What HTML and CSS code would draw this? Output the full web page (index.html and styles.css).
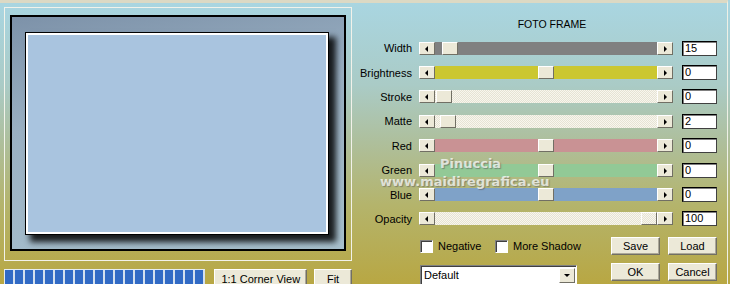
FILE: index.html
```html
<!DOCTYPE html>
<html lang="en">
<head>
  <meta charset="UTF-8" />
  <title>Foto Frame</title>
  <link rel="stylesheet" href="styles.css">
</head>
<body>

<div class="dialog">
  <div class="left">
    <div class="preview">
      <div class="frame">
        <div class="photo"></div>
      </div>
    </div>
    <div class="preview-bar">
      <div class="progress"></div>
      <button class="btn corner">1:1 Corner View</button>
      <button class="btn fit">Fit</button>
    </div>
  </div>

  <div class="panel">
    <div class="title">FOTO FRAME</div>

    <div class="rows">
      <label>Width</label>
      <div class="slider"><span class="arrow left"></span><div class="track gray"><span class="thumb" style="margin-left:7px"></span></div><span class="arrow right"></span></div>
      <div class="value">15</div>

      <label>Brightness</label>
      <div class="slider"><span class="arrow left"></span><div class="track yellow"><span class="thumb" style="margin-left:103px"></span></div><span class="arrow right"></span></div>
      <div class="value">0</div>

      <label>Stroke</label>
      <div class="slider"><span class="arrow left"></span><div class="track dots"><span class="thumb" style="margin-left:1px"></span></div><span class="arrow right"></span></div>
      <div class="value">0</div>

      <label>Matte</label>
      <div class="slider"><span class="arrow left"></span><div class="track dots"><span class="thumb" style="margin-left:5px"></span></div><span class="arrow right"></span></div>
      <div class="value">2</div>

      <label>Red</label>
      <div class="slider"><span class="arrow left"></span><div class="track red"><span class="thumb" style="margin-left:103px"></span></div><span class="arrow right"></span></div>
      <div class="value">0</div>

      <label>Green</label>
      <div class="slider"><span class="arrow left"></span><div class="track green"><span class="thumb" style="margin-left:103px"></span></div><span class="arrow right"></span></div>
      <div class="value">0</div>

      <label>Blue</label>
      <div class="slider"><span class="arrow left"></span><div class="track blue"><span class="thumb" style="margin-left:103px"></span></div><span class="arrow right"></span></div>
      <div class="value">0</div>

      <label>Opacity</label>
      <div class="slider"><span class="arrow left"></span><div class="track dots"><span class="thumb dots" style="margin-left:206px"></span></div><span class="arrow right"></span></div>
      <div class="value">100</div>
    </div>

    <div class="options">
      <div class="check first"><span class="box"></span>Negative</div>
      <div class="check second"><span class="box"></span>More Shadow</div>
      <button class="btn small">Save</button>
      <button class="btn small">Load</button>
    </div>

    <div class="actions">
      <div class="select">Default<span class="drop"></span></div>
      <button class="btn small ok">OK</button>
      <button class="btn small">Cancel</button>
    </div>
  </div>

  <div class="watermark">
    <div class="wm-name">Pinuccia</div>
    <div class="wm-site">www.maidiregrafica.eu</div>
  </div>
</div>

</body>
</html>
```

FILE: styles.css
```css
body {
  margin: 0;
  width: 730px;
  height: 284px;
  overflow: hidden;
  font-family: 'Liberation Sans', Arial, sans-serif;
  font-size: 11px;
  color: #000;
  background: linear-gradient(to bottom, #a9d6e2 0%, #aacbc6 30%, #aebf9c 50%, #b4b46c 72%, #b8a743 100%);
}

.dialog {
  position: relative;
  display: flex;
  width: 727px;
  height: 281px;
  border-top: 3px solid #dcd9c4;
  border-right: 1px solid #eef0e6;
}

.left {
  padding: 4px 0 0 4px;
  width: 348px;
}

.preview {
  width: 348px;
  height: 254px;
  box-sizing: border-box;
  border: 1px solid #f2f2ea;
  padding: 7px 5px 0;
}

.frame {
  width: 336px;
  height: 236px;
  box-sizing: border-box;
  border: 2px solid #000;
  padding: 16px 0 0 14px;
  background: linear-gradient(170deg, #7d92a9 0%, #9ab0c3 40%, #a8c0cd 100%);
}

.photo {
  width: 302px;
  height: 201px;
  box-sizing: border-box;
  border: 2px solid #fff;
  background-color: #a9c4df;
  box-shadow: 0 0 0 1px #000, 6px 6px 6px 2px rgba(0,0,0,0.85);
}

.preview-bar {
  display: flex;
  align-items: flex-start;
  margin-top: 8px;
}

.progress {
  width: 202px;
  height: 16px;
  box-sizing: border-box;
  border-top: 1px solid #e4ecf2;
  border-left: 1px solid #e4ecf2;
  background: repeating-linear-gradient(90deg, #316ac5 0 8px, #d4e0ee 8px 10px);
}

.btn {
  font-family: 'Liberation Sans', Arial, sans-serif;
  font-size: 11px;
  color: #000;
  background-color: #ece9d8;
  border: 1px solid;
  border-color: #fff #716f64 #716f64 #fff;
  box-shadow: inset -1px -1px #aca899;
  padding: 0;
  height: 18px;
}

.corner {
  margin-left: 9px;
  width: 93px;
  height: 19px;
}

.fit {
  margin-left: 7px;
  width: 38px;
  height: 19px;
}

.panel {
  flex: 1;
  padding-top: 11px;
}

.title {
  margin-left: 67px;
  width: 266px;
  line-height: 20px;
  text-align: center;
  font-size: 10.5px;
}

.rows {
  display: grid;
  grid-template-columns: 67px 254px 44px;
  grid-auto-rows: 24.4px;
  align-items: center;
  margin-top: 2px;
}

.rows label {
  text-align: right;
  padding-right: 7px;
  white-space: nowrap;
}

.slider {
  display: flex;
  height: 13px;
}

.arrow {
  position: relative;
  width: 16px;
  height: 13px;
  box-sizing: border-box;
  background-color: #ece9d8;
  border: 1px solid;
  border-color: #fff #716f64 #716f64 #fff;
}

.arrow::before {
  content: "";
  position: absolute;
  top: 3px;
  left: 5px;
  border-top: 3px solid transparent;
  border-bottom: 3px solid transparent;
}

.arrow.left::before {
  border-right: 3px solid #000;
}

.arrow.right::before {
  left: 6px;
  border-left: 3px solid #000;
}

.track {
  flex: 1;
  display: flex;
}

.gray { background-color: #808080; }
.yellow { background-color: #cbc730; }
.red { background-color: #c99294; }
.green { background-color: #92c996; }
.blue { background-color: #7fa2c8; }

.dots {
  background: repeating-conic-gradient(#f8f6ee 0 25%, #e6e3d4 0 50%) 0 0 / 2px 2px;
}

.thumb {
  width: 16px;
  height: 13px;
  box-sizing: border-box;
  background-color: #ece9d8;
  border: 1px solid;
  border-color: #fff #716f64 #716f64 #fff;
}

.value {
  margin-left: 9px;
  width: 35px;
  height: 15px;
  box-sizing: border-box;
  background: #fff;
  border: 1px solid;
  border-color: #000 #404040 #404040 #000;
  box-shadow: inset 1px 1px #808080;
  padding-left: 2px;
  line-height: 13px;
}

.options {
  display: flex;
  align-items: center;
  height: 18px;
  margin-top: 6px;
  padding-left: 68px;
}

.check {
  display: flex;
  align-items: center;
}

.check.first { width: 75px; }
.check.second { width: 116px; }

.box {
  width: 13px;
  height: 13px;
  box-sizing: border-box;
  background: #fff;
  border: 1px solid;
  border-color: #808080 #fff #fff #808080;
  box-shadow: inset 1px 1px #404040;
  margin-right: 5px;
}

.small {
  width: 49px;
  height: 18px;
  margin-right: 8px;
}

.actions {
  display: flex;
  align-items: flex-start;
  margin-top: 8px;
  padding-left: 68px;
}

.select {
  position: relative;
  width: 157px;
  height: 20px;
  margin-top: 2px;
  box-sizing: border-box;
  background: #fff;
  border: 1px solid;
  border-color: #808080 #fff #fff #808080;
  box-shadow: inset 1px 1px #404040;
  padding: 3px 0 0 3px;
}

.drop {
  position: absolute;
  top: 2px;
  right: 1px;
  width: 16px;
  height: 15px;
  box-sizing: border-box;
  background-color: #ece9d8;
  border: 1px solid;
  border-color: #fff #716f64 #716f64 #fff;
}

.drop::before {
  content: "";
  position: absolute;
  top: 5px;
  left: 4px;
  border-left: 3px solid transparent;
  border-right: 3px solid transparent;
  border-top: 3px solid #000;
}

.ok { margin-left: 34px; }

/* watermark sits over the sliders */
.watermark {
  position: absolute;
  left: 380px;
  top: 152px;
  font-family: 'DejaVu Sans', sans-serif;
  font-weight: bold;
  font-size: 13px;
  color: rgba(255,255,255,0.72);
  text-shadow: 1px 1px 1px rgba(90,90,90,0.55);
  line-height: 18px;
  pointer-events: none;
}

.wm-name {
  margin-left: 60px;
}
```
